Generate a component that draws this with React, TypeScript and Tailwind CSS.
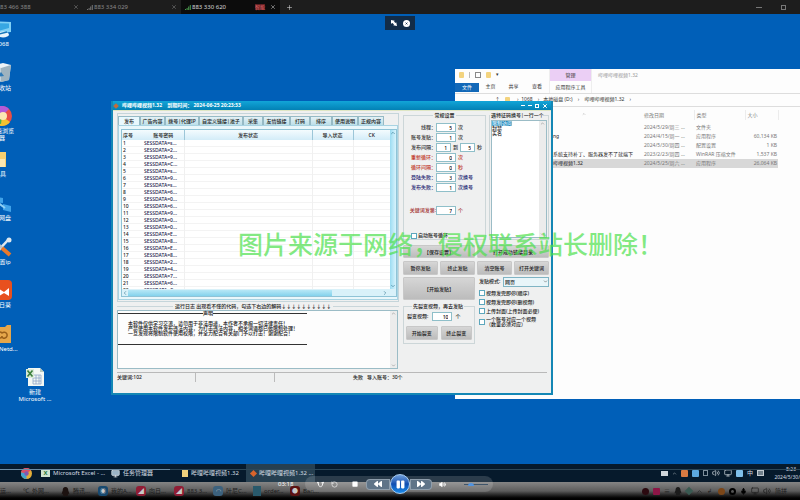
import React, { FC, ReactNode } from "react";
import clsx from "clsx";
import {
  LuChevronDown,
  LuChevronLeft,
  LuChevronRight,
  LuChevronUp,
  LuMic,
  LuMonitor,
  LuPlus,
  LuRotateCcw,
  LuVolume2,
  LuX,
} from "react-icons/lu";
import { FaBackward, FaForward, FaPause, FaQq, FaStop } from "react-icons/fa";

const accounts = "s29Cs9s606900E8E82476C".split("").map((key) => `SESSDATA=${key}...`);

const pageTabs = [
  { name: "发布", width: "w-[22px]" },
  { name: "广告内容", width: "w-[25px]" },
  { name: "拨号|代理IP", width: "w-[34px]" },
  { name: "自定义链接|池子", width: "w-[44px]" },
  { name: "采集", width: "w-[20px]" },
  { name: "友情链接", width: "w-[27px]" },
  { name: "打码", width: "w-[20px]" },
  { name: "排序", width: "w-[22px]" },
  { name: "使用说明", width: "w-[26px]" },
  { name: "正规内容", width: "w-[26px]" },
];

const settings = [
  { label: "线程：", value: "5", unit: "次", tone: "text-[#333]" },
  { label: "账号发贴：", value: "1", unit: "次", tone: "text-[#333]" },
  { label: "发布间隔：", value: "1", second: "5", unit: "秒", tone: "text-[#333]" },
  { label: "重新循环：", value: "0", unit: "次", tone: "text-[#c0392b]" },
  { label: "循环间隔：", value: "0", unit: "秒", tone: "text-[#c0392b]" },
  { label: "登陆失败：", value: "3", unit: "次换号", tone: "text-[#1c1c70]" },
  { label: "发布失败：", value: "1", unit: "次换号", tone: "text-[#1c1c70]" },
];

const files = [
  { name: "", date: "2024/5/29/周三 ...", type: "文件夹", size: "" },
  { name: "ng", date: "2024/4/15/周一 ...", type: "应用程序", size: "60,134 KB" },
  { name: "", date: "2024/5/30/周四 ...", type: "配置设置", size: "1 KB" },
  { name: "系统支持补丁、服务器发不了就端下", date: "2023/2/23/周四 ...", type: "WinRAR 压缩文件", size: "1,537 KB" },
  { name: "哔哩视频1.32", date: "2024/5/25/周六 ...", type: "应用程序", size: "26,064 KB" },
];

const Signal: FC<{ className: string }> = ({ className }) => (
  <svg viewBox="0 0 6 5" className={clsx("h-[5px] w-[6px]", className)} fill="currentColor">
    <path d="M0 4h1v1H0zM1.6 3h1v2h-1zM3.2 1.5h1V5h-1zM4.8 0h1v5h-1z" />
  </svg>
);

const TabBar = () => (
  <header className="flex h-[14px] shrink-0 items-stretch overflow-hidden bg-[#1d1d1d] text-[6px] text-[#8a8a8a]">
    <div className="flex w-[83px] items-center justify-between pr-1">
      <span>83 466 388</span>
      <button aria-label="关闭"><LuX className="size-[6px]" /></button>
    </div>
    <div className="flex w-[98px] items-center gap-px pl-1 pr-1">
      <Signal className="text-[#777]" />
      <span className="grow">883 334 029</span>
      <button aria-label="关闭"><LuX className="size-[6px]" /></button>
    </div>
    <div className="flex w-[99px] items-center gap-px bg-[#0c0c0c] pl-1 pr-1 text-[#d8d8d8]">
      <Signal className="text-[#4b9c4e]" />
      <span className="grow">883 330 620</span>
      <span className="mr-1 bg-[#5c1f22] text-[5px] leading-[6px] text-[#e86b6b]">智能</span>
      <button aria-label="关闭"><LuX className="size-[6px]" /></button>
    </div>
    <button aria-label="新建标签" className="px-1.5 text-[#d0d0d0]"><LuPlus className="size-[7px]" /></button>
    <div className="ml-auto flex items-center gap-[19px] pr-[14px] text-[#777]">
      <span className="h-px w-[6px] bg-current" />
      <span className="size-[5px] border border-current" />
    </div>
  </header>
);

const Shortcut: FC<{ label: ReactNode; children: ReactNode; className: string }> = ({ label, children, className }) => (
  <div className={clsx("absolute flex w-[40px] flex-col items-center gap-[2px] text-center text-[6px] leading-[7px] text-white", className)}>
    <svg viewBox="0 0 20 20" className="size-[20px]">{children}</svg>
    <span className="whitespace-nowrap">{label}</span>
  </div>
);

const Shortcuts = () => (
  <>
    <Shortcut className="-left-[18px] top-[5px]" label="2068">
      <path d="M1 2l18 1v10L1 15z" fill="#7fd0f5" />
      <path d="M3 4l14 .6V9L3 13z" fill="#37a7e3" />
      <ellipse cx="11" cy="15.500" rx="6" ry="3" fill="#e9f5fb" />
      <path d="M7 15l8-2" stroke="#1576b9" strokeWidth="1.500" />
    </Shortcut>
    <Shortcut className="-left-[18px] top-[49px]" label="回收站">
      <path d="M2 2l7 2 10-2-2 15-8 2-5-2z" fill="#c3d3dc" />
      <path d="M9 4l10-2-2 15-8 2z" fill="#9eb3bf" />
      <path d="M2 2l9-2 8 2-10 3z" fill="#eef4f7" />
      <path d="M5 14l4-5 3 4z" fill="#2c7ab8" />
    </Shortcut>
    <Shortcut className="-left-[18px] top-[92px]" label={<>极速浏览<br />器</>}>
      <circle cx="10" cy="10" r="10" fill="#e94f45" />
      <path d="M10 10L1 5A10 10 0 0117 3z" fill="#b45bd8" />
      <path d="M10 10L2 16a10 10 0 01-1-11z" fill="#2d9be0" />
      <path d="M10 10L18 16A10 10 0 012 16z" fill="#f4c22f" />
      <path d="M10 10l-1 8-7-2z" fill="#4db04a" />
      <circle cx="11" cy="10" r="4" fill="#fbe9b3" />
    </Shortcut>
    <Shortcut className="-left-[22px] top-[135px]" label={<span className="pl-1">工具</span>}>
      <path d="M2 3h16v15H2z" fill="#f6cf70" />
      <path d="M12 10h5v8h-5z" fill="#fbe6b0" />
    </Shortcut>
    <Shortcut className="-left-[18px] top-[179px]" label="的网盘">
      <path d="M1 3l10 2v5L1 9zM11 11l8 2v6l-8-2z" fill="#3fa2e8" />
      <path d="M5 9l8 6" stroke="#8fd0f4" strokeWidth="2" />
    </Shortcut>
    <Shortcut className="-left-[18px] top-[223px]" label="设置ip">
      <path d="M3 17L16 3" stroke="#dfe8ee" strokeWidth="2.500" />
      <circle cx="17" cy="3" r="2.500" fill="#dfe8ee" />
      <path d="M3 4l8 8" stroke="#b8c4cc" strokeWidth="3" />
      <path d="M10 11l8 7" stroke="#e8792c" strokeWidth="4" />
    </Shortcut>
    <Shortcut className="-left-[18px] top-[266px]" label="向日葵">
      <rect width="20" height="20" rx="4" fill="#e8501e" />
      <path d="M7 9l5 3 5-4v8l-5-3-5 3z" fill="#fff" />
    </Shortcut>
    <Shortcut className="-left-[18px] top-[310px]" label="Pan-Netd...">
      <path d="M0 3h13l2-2h4v18H0z" fill="#e5a64a" />
      <path d="M8 14a3 3 0 11 2-5 3 3 0 113 5 2 2 0 01-3-2 2 2 0 01-2 2z" fill="none" stroke="#9a5f1a" strokeWidth="1.500" />
    </Shortcut>
    <Shortcut className="left-[15px] top-[353px]" label={<>新建<br />Microsoft ...</>}>
      <path d="M3 1h12l4 4v14H3z" fill="#f3f8f4" />
      <path d="M15 1l4 4h-4z" fill="#b8c8bd" />
      <path d="M8 8h8v9H8zM8 11h8M8 14h8M11 8v9M14 8v9" fill="none" stroke="#8fa6c9" strokeWidth=".8" />
      <path d="M1 2h8v9H1z" fill="#d9ead9" />
      <path d="M2.500 3.500l5 6M7.500 3.500l-5 6" stroke="#3b7f3b" strokeWidth="1.600" />
    </Shortcut>
  </>
);

const Folder = () => <span className="h-[6px] w-[5px] rounded-[1px] bg-[#f3d37e]" />;

const Explorer = () => (
  <section className="absolute left-[455px] right-0 top-[55px] h-[330px] overflow-hidden bg-[#fdfdfd] text-[5px] text-[#333]">
    <div className="flex h-[24px]">
      <div className="flex flex-col">
        <div className="flex h-[12px] items-center gap-[5px] pl-1">
          <Folder />
          <span className="h-[6px] w-px bg-[#bbb]" />
          <input type="checkbox" aria-label="属性" defaultChecked className="size-[6px] appearance-none border border-[#888]" />
          <Folder />
          <span>▾</span>
        </div>
        <nav className="flex h-[12px] items-center">
          <button className="h-[9px] w-[24px] bg-[#1268b8] leading-[9px] text-white">文件</button>
          <button className="w-[23px]">主页</button>
          <button className="w-[23px]">共享</button>
          <button className="w-[24px]">查看</button>
        </nav>
      </div>
      <div className="flex w-[43px] flex-col border-x border-[#eee] text-center">
        <span className="h-[12px] bg-[#ebcff5] leading-[12px]">管理</span>
        <button className="h-[12px] whitespace-nowrap leading-[12px]">应用程序工具</button>
      </div>
      <h2 className="pl-[6px] leading-[12px] text-[#999]">哔哩哔哩视频1.32</h2>
    </div>
    <div className="flex h-[14px] items-center gap-[5px] border-y border-[#ddd] pl-[40px]">
      <span>↑</span>
      <Folder />
      <span className="whitespace-pre pl-[2px]">›  1068    ›   本地磁盘 (D:)    ›    哔哩哔哩视频1.32    ›</span>
    </div>
    <table className="mt-[3px] w-full table-fixed border-collapse text-[#777]">
      <thead>
        <tr className="h-[10px] text-left leading-[7px]">
          <th className="w-[187px] p-0 font-normal"><LuChevronUp className="mb-[3px] ml-[127px] size-[4px]" /></th>
          <th className="w-[52px] border-r border-[#ececec] p-0 pl-[2px] font-normal">修改日期</th>
          <th className="w-[51px] border-r border-[#ececec] p-0 pl-[2px] font-normal">类型</th>
          <th className="w-[33px] border-r border-[#ececec] p-0 pl-[2px] font-normal">大小</th>
          <th />
        </tr>
        <tr className="h-[3px]" />
      </thead>
      <tbody>
        {files.map((file, i) => (
          <tr key={file.date} className={clsx("h-[9px] whitespace-nowrap leading-[9px]", i === 4 && "bg-[#d8d8d8]")}>
            <td className="p-0 pl-[98px] text-[#222]"><span className="block w-[84px] overflow-hidden">{file.name}</span></td>
            <td className="p-0 pl-[2px]">{file.date}</td>
            <td className="p-0 pl-[2px]">{file.type}</td>
            <td className="p-0 pr-px text-right">{file.size}</td>
            <td className="bg-[#fdfdfd]" />
          </tr>
        ))}
      </tbody>
    </table>
  </section>
);

const NumberBox: FC<{ label: string; value: string; className?: string; id?: string }> = ({ label, value, className, id }) => (
  <input
    id={id}
    aria-label={label}
    defaultValue={value}
    className={clsx("h-[9px] border border-[#8fbfc9] bg-white pr-[3px] text-right text-[5px] leading-[7px] text-black", className)}
  />
);

const PushButton: FC<{ children: ReactNode; className?: string }> = ({ children, className }) => (
  <button
    className={clsx(
      "whitespace-nowrap rounded-[1px] border border-[#c8c8c8] bg-linear-to-b from-[#d6d6d6] to-[#bcbcbc] text-center leading-[6px] text-[#222]",
      className
    )}
  >
    {children}
  </button>
);

const Tick: FC<{ children: ReactNode; className?: string }> = ({ children, className }) => (
  <label className={clsx("flex items-center gap-px whitespace-nowrap", className)}>
    <input type="checkbox" className="size-[6px] shrink-0 appearance-none border border-[#5da7bd] bg-white" />
    {children}
  </label>
);

const AccountTable = () => (
  <div className="m-[2px] mt-[3px] flex h-[168px] w-[276px] flex-col border border-[#8fc3d6] bg-white">
    <div className="flex min-h-0 grow">
      <div className="grow overflow-hidden">
        <table className="h-[162px] w-full table-fixed border-collapse leading-[6px]">
          <thead>
            <tr className="h-[10px] bg-linear-to-b from-[#f4fbfe] to-[#d3ecf8] text-[#222]">
              <th className="w-[21px] p-0 pl-px text-left font-medium">序号</th>
              <th className="w-[41px] border-r border-[#9cc6d8] p-0 font-medium">账号密码</th>
              <th className="w-[128px] border-r border-[#9cc6d8] p-0 font-medium">发布状态</th>
              <th className="w-[41px] border-r border-[#9cc6d8] p-0 font-medium">导入状态</th>
              <th className="p-0 font-medium">CK</th>
            </tr>
          </thead>
          <tbody>
            {accounts.map((account, i) => (
              <tr key={i} className="border-b border-[#f3f3f3]">
                <td className="p-0 pl-px">{i + 1}</td>
                <td className="border-r border-[#f0f0f0] p-0 pl-px text-[#20204a]">{account}</td>
                <td className="border-r border-[#f0f0f0] p-0" />
                <td className="border-r border-[#f0f0f0] p-0" />
                <td className="p-0" />
              </tr>
            ))}
          </tbody>
        </table>
      </div>
      <div className="flex w-[7px] flex-col items-center justify-between bg-linear-to-r from-[#9bdcf2] to-[#d8f3fc] text-[#1c6580]">
        <LuChevronUp className="size-[6px]" />
        <LuChevronDown className="size-[6px]" />
      </div>
    </div>
    <div className="flex h-[7px] shrink-0 items-center bg-[#d9f1f9] pr-[8px] text-[#1c6580]">
      <LuChevronLeft className="size-[6px]" />
      <span className="h-[6px] w-[204px] bg-linear-to-b from-[#b6e7f6] to-[#83d2ec]" />
      <LuChevronRight className="ml-auto size-[6px]" />
    </div>
  </div>
);

const LogPanel = () => (
  <section className="mt-px">
    <div className="flex items-center gap-[2px] leading-[7px]">
      <span className="h-px w-[56px] bg-[#c9d6da]" />
      <h3>运行日志 出现看不懂的代码，勾选下右边的解码↓↓↓↓↓↓↓↓↓↓</h3>
      <span className="h-px grow bg-[#c9d6da]" />
    </div>
    <div className="flex h-[59px] w-[281px] justify-between border border-[#9bbcc6] bg-[#fdfdfd]">
      <div className="w-[189px] leading-[5px]">
        <div className="flex items-center">
          <span className="h-px w-[85px] bg-[#333]" />
          <span>声明</span>
          <span className="h-px grow bg-[#333]" />
        </div>
        <p className="whitespace-nowrap border-b border-[#333] pb-[8px] pl-[10px] pt-[5px]">
          本软件仅供学习交流，请勿用于非法用途，本作者不承担一切法律责任！<br />
          严禁使用本软件发布违法内容，为打击违法内容，相关词语都已做限制处理！<br />
          一旦发现将限制软件使用权限，并全力配合有关部门予以打击！谢谢配合！
        </p>
      </div>
      <div className="flex w-[7px] flex-col items-center justify-between bg-[#ececec] text-[#666]">
        <LuChevronUp className="size-[5px]" />
        <LuChevronDown className="size-[5px]" />
      </div>
    </div>
  </section>
);

const SettingsPanel = () => (
  <div className="flex justify-between">
    <fieldset className="h-[128px] w-[83px] border border-[#ccd6d8]">
      <legend className="mx-auto px-px leading-[6px]">常规设置</legend>
      <div className="flex flex-col gap-px pt-[5px]">
        {settings.map((row) => (
          <div key={row.label} className={clsx("flex h-[9px] items-center gap-[2px] whitespace-nowrap leading-[9px]", row.tone)}>
            <span className="-mr-[2px] flex w-[32px] justify-end">{row.label}</span>
            <NumberBox label={row.label} value={row.value} className={row.second ? "w-[15px]" : "w-[20px]"} />
            {row.second && (
              <>
                <span>到</span>
                <NumberBox label="最大间隔" value={row.second} className="w-[15px]" />
              </>
            )}
            <span>{row.unit}</span>
          </div>
        ))}
        <div className="mt-[13px] flex h-[9px] items-center gap-[2px] whitespace-nowrap leading-[9px] text-[#a32f2f]">
          <span className="-mr-[2px] flex w-[32px] justify-end">关键词发第:</span>
          <NumberBox label="关键词发第" value="7" className="w-[20px]" />
          <span>个</span>
        </div>
        <Tick className="mt-[16px] pl-[7px]">启动账号循环</Tick>
      </div>
    </fieldset>
    <fieldset className="h-[128px] w-[60px] min-w-0 border border-[#ccd6d8]">
      <legend className="whitespace-nowrap pl-px leading-[6px]">遇特征码换号|一行一个</legend>
      <div className="mx-px mt-[2px] flex h-[118px] justify-between border border-[#9bbcc6] bg-white">
        <div className="leading-[5px]">
          <p className="bg-[#2b87b8] text-[#d8f0ff]">限制访问</p>
          <p>封禁</p>
          <p>实名</p>
        </div>
        <div className="flex w-[7px] flex-col items-center justify-between bg-[#ececec] text-[#666]">
          <LuChevronUp className="size-[5px]" />
          <LuChevronDown className="size-[5px]" />
        </div>
      </div>
    </fieldset>
  </div>
);

const ActionPanel = () => (
  <div className="mt-[5px] grid grid-cols-2 gap-x-[2px]">
    <div className="flex flex-col">
      <PushButton className="h-[13px]">【保存设置】</PushButton>
      <div className="mt-[3px] grid grid-cols-2 gap-[2px]">
        <PushButton className="h-[14px]">暂停发贴</PushButton>
        <PushButton className="h-[14px]">终止发贴</PushButton>
      </div>
      <PushButton className="mt-[2px] h-[23px]">【开始发贴】</PushButton>
      <fieldset className="mt-[3px] h-[41px] border border-[#ccd6d8]">
        <legend className="ml-[8px] px-px leading-[6px]">先裂变视频，再去发贴</legend>
        <div className="mt-[3px] flex h-[9px] items-center">
          <label htmlFor="split" className="pl-[3px]">裂变视频:</label>
          <NumberBox id="split" label="裂变视频" value="10" className="ml-[4px] w-[20px]" />
          <span className="pl-[3px]">个</span>
        </div>
        <div className="mx-[2px] mt-[5px] grid grid-cols-2 gap-[3px]">
          <PushButton className="h-[14px]">开始裂变</PushButton>
          <PushButton className="h-[14px]">终止裂变</PushButton>
        </div>
      </fieldset>
    </div>
    <div className="flex flex-col">
      <PushButton className="h-[13px]">打开成功链接目录</PushButton>
      <div className="mt-[3px] grid grid-cols-2 gap-[2px]">
        <PushButton className="h-[14px]">清空账号</PushButton>
        <PushButton className="h-[14px]">打开关键词</PushButton>
      </div>
      <div className="mt-[2px] flex h-[9px] items-center justify-between pl-[2px]">
        <label htmlFor="mode">发贴模式:</label>
        <div className="flex items-center border border-[#7fb4c4] bg-[#e8f5f9]">
          <select id="mode" className="h-[8px] w-[39px] appearance-none pl-px text-[5px] leading-[6px]">
            <option>网页</option>
          </select>
          <LuChevronDown className="size-[5px]" />
        </div>
      </div>
      <div className="mt-[4px] flex flex-col gap-[3px] pl-[2px] leading-[6px]">
        <Tick>视频发完即停(顺序)</Tick>
        <Tick>视频发完即停(删视频)</Tick>
        <Tick>上传封面(上传封面必便)</Tick>
        <Tick className="leading-[5px]"><span>一个账号对应一个视频<br />（数量必须对应）</span></Tick>
      </div>
    </div>
  </div>
);

const PosterWindow = () => (
  <section className="absolute left-[111px] top-[87px] flex h-[294px] w-[442px] flex-col border-x-2 border-b-2 border-[#1487b5] bg-[#eff0f0] text-[5px] font-medium leading-[7px] text-[#222]">
    <div className="flex h-[9px] shrink-0 items-center bg-linear-to-b from-[#12a5d8] to-[#0381b5] pl-px text-white">
      <span className="mr-[4px] size-[4px] rotate-45 bg-[#c46b3a]" />
      <h1 className="whitespace-pre font-bold">哔哩哔哩视频1.32    到期时间： 2024-06-25 20:23:33</h1>
      <div className="ml-auto flex items-center gap-[3px] pr-[3px]">
        <span className="h-px w-[4px] bg-white" />
        <button aria-label="最小化" className="h-px w-[4px] bg-white" />
        <button aria-label="最大化" className="size-[4px] border border-white" />
        <button aria-label="关闭"><LuX className="size-[6px]" strokeWidth={4} /></button>
      </div>
    </div>
    <div className="h-px shrink-0 bg-[#dfe6c4]" />
    <div className="flex grow justify-between pl-[4px] pr-[2px]">
      <div className="w-[282px] pt-[2px]">
        <div className="h-[189px] border border-[#c5d5da] pt-[2px]">
          <nav className="flex h-[9px]">
            {pageTabs.map((tab, i) => (
              <button
                key={tab.name}
                className={clsx(
                  "shrink-0 whitespace-nowrap border border-b-0 border-[#96bac5] text-center leading-[8px]",
                  tab.width,
                  i === 0 ? "bg-[#e9f8fd]" : "bg-linear-to-b from-[#e4f1f5] to-[#bcdfe9]"
                )}
              >
                {tab.name}
              </button>
            ))}
          </nav>
          <div className="h-[175px] w-[280px] border border-[#a8d3e2] bg-[#eaf7fb]">
            <AccountTable />
          </div>
        </div>
        <LogPanel />
        <div className="mt-[3px] flex w-[430px] border-t border-[#b9b9b9] leading-[9px]">
          <span className="w-[79px] border-r border-[#bbb]">关键词:102</span>
          <span className="w-[79px] border-r border-[#bbb]" />
          <span className="w-[78px]" />
          <span className="whitespace-pre">失败   导入账号：30个</span>
        </div>
      </div>
      <div className="w-[146px] pt-px">
        <SettingsPanel />
        <ActionPanel />
      </div>
    </div>
  </section>
);

const TaskItem: FC<{ icon?: ReactNode; label?: string; className: string }> = ({ icon, label, className }) => (
  <button className={clsx("flex shrink-0 items-center gap-[3px] overflow-hidden whitespace-nowrap text-left", className)}>
    {icon}
    {label}
  </button>
);

const Taskbar = () => (
  <footer className="relative flex h-[18px] shrink-0 items-center overflow-hidden bg-[#061a2c] text-[6px] text-[#d5dde3]">
    <div className="absolute inset-x-0 top-[5px] h-px bg-[#2d4757]" />
    <div className="absolute left-0 top-[5px] h-px w-[170px] bg-[#6e8ca3]" />
    <TaskItem
      className="ml-[21px] w-[20px]"
      icon={
        <svg viewBox="0 0 10 10" className="size-[11px]">
          <circle cx="5" cy="5" r="5" fill="#e3ae38" />
          <path d="M5 5L0 4a5 5 0 019-2z" fill="#d9506b" />
          <path d="M5 5v5a5 5 0 01-5-6z" fill="#41a3cf" />
          <circle cx="5" cy="5" r="2" fill="#8058b3" />
        </svg>
      }
    />
    <TaskItem className="w-[70px]" label="Microsoft Excel - ..." icon={<span className="flex h-[8px] w-[9px] items-center justify-center bg-[#cfe3d0] font-bold text-[#2e7a41]">X</span>} />
    <TaskItem className="w-[71px]" label="任务管理器" icon={<LuMonitor className="size-[9px] fill-[#9bb4c6]" />} />
    <TaskItem className="w-[64px]" label="哔哩哔哩视频1.32" icon={<span className="h-[8px] w-[6px] bg-[#efd07c]" />} />
    <TaskItem className="h-full w-[69px] bg-[#263f50] pl-[5px]" label="哔哩哔哩视频1.32 ..." icon={<span className="size-[5px] rotate-45 bg-[#d8642c]" />} />
    <div className="ml-auto flex items-center gap-[4px]">
      <span className="h-[5px] w-[7px] bg-[#cfd6db]" />
      <LuChevronUp className="size-[5px]" />
      <span className="size-[7px] rounded-[1px] bg-[#d97a42]" />
      <span className="size-[7px] rounded-[1px] bg-[#5ca8e0]" />
      <span className="h-[6px] w-[5px] border border-[#7e8f9b]" />
      <LuVolume2 className="size-[8px]" />
      <LuMonitor className="size-[8px]" />
      <span className="size-[7px] rounded-[1px] bg-[#7fbfea]" />
      <span>中</span>
      <span className="h-[6px] w-[7px] border border-[#c4ccd2] bg-[#71808b]" />
      <div className="w-[32px] text-right text-[5px] leading-[8px]">
        <p className="pr-[4px]">8:23</p>
        <p className="whitespace-nowrap">2024/5/30/</p>
      </div>
    </div>
  </footer>
);

const AppDot: FC<{ tone: string; children?: ReactNode }> = ({ tone, children }) => (
  <span className={clsx("flex size-[10px] shrink-0 items-center justify-center rounded-[3px] text-[#c8c8c8]", tone)}>{children}</span>
);

const HostBar = () => (
  <footer className="flex h-[18px] shrink-0 items-center overflow-hidden bg-linear-to-b from-[#858585] via-[#5c5c5c] to-black text-[6px] leading-[8px] text-[#1c1c1c]">
    <TaskItem className="w-[23px]" label="运..." />
    <TaskItem className="w-[38px]" label="外网..." icon={<span>℃</span>} />
    <TaskItem className="w-[37px]" label="腾讯..." icon={<FaQq className="size-[9px] text-[#1c1210]" />} />
    <TaskItem className="w-[38px]" label="我的A..." icon={<AppDot tone="bg-[#17496f]">◉</AppDot>} />
    <TaskItem className="w-[38px]" label="向日..." icon={<AppDot tone="bg-[#901d35]">◢</AppDot>} />
    <TaskItem className="w-[39px]" label="883 3..." icon={<AppDot tone="bg-[#901d35]">◢</AppDot>} />
    <TaskItem className="w-[40px]" label="叶尼C..." icon={<AppDot tone="bg-[#3c617d]">◠</AppDot>} />
    <TaskItem className="w-[37px]" label="order..." icon={<span className="h-[10px] w-[8px] bg-[#29596b]" />} />
    <TaskItem className="w-[34px]" label="Ban..." icon={<AppDot tone="bg-[#5c1212]">●</AppDot>} />
    <div className="ml-auto flex items-center gap-[4px] pr-[11px]">
      <span className="size-[7px] rounded-full bg-[#2b0a10]" />
      <span className="size-[7px] rounded-[1px] bg-[#8d1646]" />
      <span className="w-[6px]">≡</span>
      <FaQq className="size-[8px]" />
      <span className="size-[6px] rotate-45 bg-[#3a5a52]" />
      <LuChevronUp className="size-[7px]" />
      <span className="w-[7px]">↲</span>
      <span className="size-[7px] rounded-full bg-[#7b4618]" />
      <span className="size-[7px] rounded-full border-2 border-black" />
      <LuMic className="size-[7px] fill-black text-black" />
      <LuMonitor className="size-[8px]" />
      <LuVolume2 className="size-[8px]" />
      <span className="w-[14px]">简拼</span>
    </div>
  </footer>
);

const Player = () => (
  <div className="absolute bottom-[4px] left-[278px] flex h-[24px] items-center text-white">
    <span className="w-[27px] text-[6px] leading-[8px]">03:18</span>
    <div className="flex h-[16px] w-[188px] items-center rounded-full bg-white/15 pl-[12px]">
      <button aria-label="随机"><svg viewBox="0 0 8 8" className="size-[7px]" fill="none" stroke="currentColor"><path d="M1 1l1 4 2 2 2-2 1-4M0 2h2M5 2h3" /></svg></button>
      <button aria-label="重复" className="ml-[7px]"><LuRotateCcw className="size-[7px]" /></button>
      <button aria-label="停止" className="ml-[14px]"><FaStop className="size-[6px]" /></button>
      <button aria-label="后退" className="ml-[8px] flex h-[11px] w-[24px] items-center justify-center rounded-l-[4px] border border-white/30 bg-[#5f7488]"><FaBackward className="size-[8px]" /></button>
      <button aria-label="暂停" className="flex size-[20px] shrink-0 items-center justify-center rounded-full border border-[#a8cdf2] bg-linear-to-b from-[#6f9fdb] via-[#114eb0] to-[#1b8bea]"><FaPause className="size-[9px]" /></button>
      <button aria-label="前进" className="flex h-[11px] w-[22px] items-center justify-center rounded-r-[4px] border border-white/30 bg-[#5f7488]"><FaForward className="size-[8px]" /></button>
      <button aria-label="静音" className="ml-[7px]"><LuVolume2 className="size-[7px] fill-white" /></button>
      <span className="ml-[18px] flex h-px w-[24px] items-center bg-[#3f556a]"><span className="ml-[4px] h-[3px] w-[6px] shrink-0 rounded-t-full bg-[#5294e0]" /></span>
    </div>
  </div>
);

export default function App() {
  return (
    <main className="relative flex h-screen flex-col overflow-hidden bg-[#005fb8] font-['Noto_Sans','Noto_Sans_CJK_SC',sans-serif]">
      <TabBar />
      <div className="relative grow">
        <Shortcuts />
        <div className="absolute left-[385px] top-[2px] flex h-[14px] w-[30px] items-center justify-center gap-[6px] bg-[#122c48] text-white">
          <svg viewBox="0 0 8 8" className="size-[6px]" fill="currentColor"><path d="M0 0l5 1-1 1 2 2 1-1 1 5-5-1 1-1-2-2-2 1z" /></svg>
          <svg viewBox="0 0 8 8" className="size-[7px]"><circle cx="4" cy="4" r="4" fill="#fff" /><path d="M3 3l2 2M5 3L3 5" stroke="#122c48" /></svg>
        </div>
        <Explorer />
        <PosterWindow />
        <p className="absolute left-[238px] top-[216px] whitespace-nowrap text-[25px] font-medium leading-[28px] text-[#4be04b]/70">
          图片来源于网络，侵权联系站长删除！
        </p>
      </div>
      <Taskbar />
      <HostBar />
      <Player />
    </main>
  );
}
